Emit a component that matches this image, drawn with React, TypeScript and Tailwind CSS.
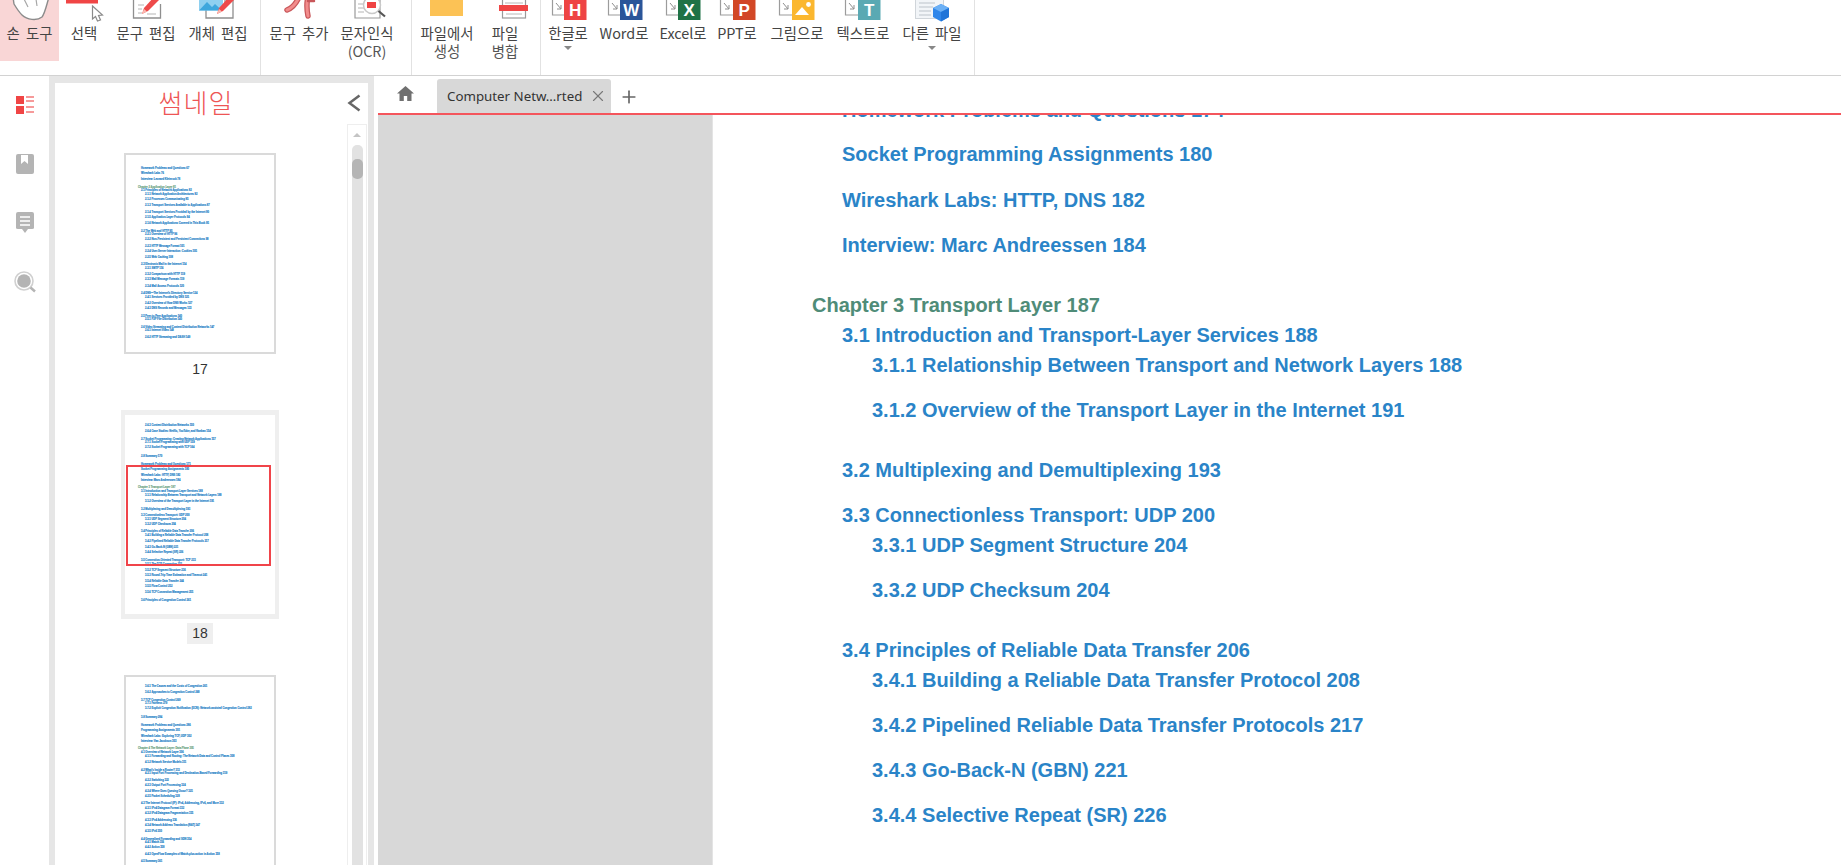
import { Plus, X } from "lucide-react";
import type { ReactNode } from "react";

const KR = "font-['Noto_Sans_CJK_KR','Noto_Sans',sans-serif]";

function HandIcon() {
    return (
        <svg viewBox="0 0 59 24" className="w-full h-full">
            <path d="M13 -3 L14 4 C17 9 19 12 22 15 C27 20 37 21 42 17 C45 13 46 7 49 -3 Z" fill="#fff" stroke="#8c8c8c" strokeWidth="1.4" />
            <path d="M24 -1 L28 7 M36 -1 L37 6" fill="none" stroke="#a8a8a8" strokeWidth="1.2" />
        </svg>
    );
}

function SelectIcon() {
    return (
        <svg viewBox="0 0 50 24" className="w-full h-full">
            <rect x="7" y="0" width="32" height="3.5" fill="#f04545" />
            <path d="M33.5 6 L43.5 15 L39.5 15.5 L41.5 20 L38.5 21 L36.5 16.5 L33.5 19 Z" fill="#fff" stroke="#8a8a8a" strokeWidth="1.2" />
        </svg>
    );
}

function Pencil({ x, y }: { x: number; y: number }) {
    return (
        <g transform={`translate(${x} ${y})`}>
            <path d="M0 14 L2 8 L12 -3 L17 0 L6 11 Z" fill="#ee4a4a" />
            <path d="M0 14 L2 9 L5 11.5 Z" fill="#f9b9b0" />
        </g>
    );
}

function TextEditIcon() {
    return (
        <svg viewBox="0 0 74 24" className="w-full h-full">
            <path d="M24.5 -2 V18 H51.5 V4" fill="#fff" stroke="#8f8f8f" strokeWidth="1.3" />
            <path d="M29 5 H35 M29 9 H33 M29 13 H33 M38 14 H47" stroke="#b5b5b5" strokeWidth="1" />
            <Pencil x={33} y={0} />
        </svg>
    );
}

function ObjectEditIcon() {
    return (
        <svg viewBox="0 0 70 24" className="w-full h-full">
            <path d="M23 -2 V18 H50 V-2" fill="#fff" stroke="#8f8f8f" strokeWidth="1.3" />
            <rect x="16" y="-2" width="24" height="12.5" fill="#8fd0f0" />
            <path d="M16 10.5 L24 2 L29 7 L32 4 L39 10.5 Z" fill="#3ea7dd" />
            <rect x="41" y="0" width="5" height="4" fill="#b9b9b9" />
            <Pencil x={34} y={0} />
        </svg>
    );
}

function AddTextIcon() {
    return (
        <svg viewBox="0 0 76 24" className="w-full h-full">
            <g fill="none" strokeLinecap="round">
                <path d="M38 -3 C35 4 31 8 26 10" stroke="#c8575a" strokeWidth="5.5" />
                <path d="M47 -3 C45 5 46 11 47 16" stroke="#c8575a" strokeWidth="5.5" />
                <path d="M38 -3 C35 4 31 8 26 10" stroke="#f28c8c" strokeWidth="3" />
                <path d="M47 -3 C45 5 46 11 47 16" stroke="#f28c8c" strokeWidth="3" />
                <path d="M47 1 H53" stroke="#c8575a" strokeWidth="2.5" />
            </g>
        </svg>
    );
}

function OcrIcon() {
    return (
        <svg viewBox="0 0 60 24" className="w-full h-full">
            <path d="M18 -2 V18 H43 V-2" fill="#fff" stroke="#9a9a9a" strokeWidth="1.2" />
            <path d="M21 4 H27 M21 8 H27 M21 12 H27" stroke="#b5b5b5" strokeWidth="1" />
            <circle cx="35" cy="5" r="8.5" fill="#fff" stroke="#c9c9c9" strokeWidth="1.5" />
            <rect x="30" y="2" width="9" height="6" fill="#ef4444" />
            <path d="M41.5 11 L48 16.5" stroke="#555" strokeWidth="2.2" />
        </svg>
    );
}

function FolderIcon() {
    return (
        <svg viewBox="0 0 70 24" className="w-full h-full">
            <rect x="18" y="-1" width="33" height="17" fill="#fcc255" />
        </svg>
    );
}

function MergeIcon() {
    return (
        <svg viewBox="0 0 46 24" className="w-full h-full">
            <rect x="20.5" y="-2" width="23" height="20" fill="#fff" stroke="#9a9a9a" strokeWidth="1.2" />
            <path d="M23 3 H41 M24 14 H40" stroke="#b8b8b8" strokeWidth="1" />
            <rect x="17" y="5" width="30" height="6" fill="#f04545" />
        </svg>
    );
}

function OfficeIcon({ w, doc, sq, color, letter }: { w: number; doc: number; sq: number; color: string; letter: string }) {
    return (
        <svg viewBox={`0 0 ${w} 24`} className="w-full h-full">
            <path d={`M${doc + 0.5} -2 V15 H${sq}`} fill="none" stroke="#9c9c9c" strokeWidth="1.2" />
            <path d={`M${doc + 4} 3 L${doc + 9} 9 M${doc + 9} 5 V9 H${doc + 5}`} fill="none" stroke="#8e8e8e" strokeWidth="1" />
            <rect x={sq} y="-1" width="22.5" height="21" fill={color} />
            {letter ? (
                <text x={sq + 11.2} y="16" textAnchor="middle" fill="#fff" fontSize="17" fontWeight="700" fontFamily="Liberation Sans, sans-serif">
                    {letter}
                </text>
            ) : (
                <>
                    <path d={`M${sq + 3} 15 L${sq + 10} 7 L${sq + 17} 15 Z`} fill="#fff" />
                    <circle cx={sq + 16.5} cy="4.5" r="2.4" fill="#fff" />
                </>
            )}
        </svg>
    );
}

function OtherIcon() {
    return (
        <svg viewBox="0 0 78 24" className="w-full h-full">
            <rect x="22.5" y="-2" width="28" height="20.5" fill="#f2f5f8" stroke="#d0d5da" strokeWidth="1" />
            <path d="M26 3 H42 M26 7 H40 M26 11 H38 M26 15 H38" stroke="#bcc3ca" strokeWidth="1" />
            <path d="M48 4 L56 8 V17 L48 21.5 L40 17 V8 Z" fill="#2f86ea" />
            <path d="M48 4 L56 8 L48 12 L40 8 Z" fill="#6cb0f5" />
            <path d="M48 12 L56 8 V17 L48 21.5 Z" fill="#1f74d8" />
        </svg>
    );
}

function ToolItem({ width, icon, label, label2, caret, active }: { width: string; icon: ReactNode; label: string; label2?: string; caret?: boolean; active?: boolean }) {
    return (
        <div className={`${width} ${active ? "bg-[#f9d6d6]" : ""} h-[61px] flex flex-col items-center shrink-0`}>
            <div className="w-full h-[24px] shrink-0 overflow-hidden">{icon}</div>
            <div className={`${KR} text-[14.4px] [word-spacing:3px] leading-[18px] text-[#444] whitespace-nowrap`}>{label}</div>
            {label2 && <div className={`${KR} text-[14.4px] leading-[18px] text-[#555] whitespace-nowrap`}>{label2}</div>}
            {caret && <div className="mt-[4px] w-0 h-0 border-x-[4px] border-x-transparent border-t-[4px] border-t-[#888]"></div>}
        </div>
    );
}

function Toolbar() {
    return (
        <div className="h-[76px] shrink-0 flex border-b border-[#d2d2d2] bg-white">
            <div className="w-[261px] shrink-0 flex border-r border-[#e2e2e2]">
                <ToolItem width="w-[59px]" icon={<HandIcon />} label="손 도구" active />
                <ToolItem width="w-[50px]" icon={<SelectIcon />} label="선택" />
                <ToolItem width="w-[74px]" icon={<TextEditIcon />} label="문구 편집" />
                <ToolItem width="w-[70px]" icon={<ObjectEditIcon />} label="개체 편집" />
            </div>
            <div className="w-[151px] shrink-0 flex border-r border-[#e2e2e2]">
                <ToolItem width="w-[76px]" icon={<AddTextIcon />} label="문구 추가" />
                <ToolItem width="w-[60px]" icon={<OcrIcon />} label="문자인식" label2="(OCR)" />
            </div>
            <div className="w-[129px] shrink-0 flex border-r border-[#e2e2e2]">
                <ToolItem width="w-[70px]" icon={<FolderIcon />} label="파일에서" label2="생성" />
                <ToolItem width="w-[46px]" icon={<MergeIcon />} label="파일" label2="병합" />
            </div>
            <div className="w-[434px] shrink-0 flex border-r border-[#e2e2e2]">
                <ToolItem width="w-[54px]" icon={<OfficeIcon w={54} doc={11} sq={23} color="#ee4444" letter="H" />} label="한글로" caret />
                <ToolItem width="w-[58px]" icon={<OfficeIcon w={58} doc={13} sq={25} color="#2a5599" letter="W" />} label="Word로" />
                <ToolItem width="w-[60px]" icon={<OfficeIcon w={60} doc={13} sq={25} color="#1f7246" letter="X" />} label="Excel로" />
                <ToolItem width="w-[48px]" icon={<OfficeIcon w={48} doc={7} sq={20} color="#d24726" letter="P" />} label="PPT로" />
                <ToolItem width="w-[72px]" icon={<OfficeIcon w={72} doc={18} sq={31} color="#fbb72f" letter="" />} label="그림으로" />
                <ToolItem width="w-[60px]" icon={<OfficeIcon w={60} doc={12} sq={25} color="#5aa9b3" letter="T" />} label="텍스트로" />
                <ToolItem width="w-[78px]" icon={<OtherIcon />} label="다른 파일" caret />
            </div>
        </div>
    );
}

function SideRail() {
    return (
        <div className="w-[49px] shrink-0 bg-white flex flex-col items-center pt-[20px]">
            <svg width="18" height="18" viewBox="0 0 18 18">
                <rect x="0" y="0" width="8" height="8" fill="#f04545" />
                <rect x="0" y="10" width="8" height="8" fill="#f04545" />
                <path d="M10 1 H18 M10 5 H18 M10 11 H18 M10 16 H18" stroke="#f47a7a" strokeWidth="1.4" />
            </svg>
            <svg width="18" height="20" viewBox="0 0 18 20" className="mt-[40px]">
                <rect x="0" y="0" width="18" height="20" rx="2" fill="#b4b4b4" />
                <path d="M5 1 H12 V10 L8.5 7 L5 10 Z" fill="#fff" />
            </svg>
            <svg width="18" height="21" viewBox="0 0 18 21" className="mt-[38px]">
                <path d="M2 0 H16 Q18 0 18 2 V16 Q18 17 16 17 H12 L9 21 L6 17 H2 Q0 17 0 16 V2 Q0 0 2 0 Z" fill="#b4b4b4" />
                <path d="M4 5 H14 M4 9 H14 M4 13 H14" stroke="#fff" strokeWidth="1.5" />
            </svg>
            <svg width="22" height="22" viewBox="0 0 22 22" className="mt-[38px]">
                <circle cx="10" cy="10" r="9" fill="#fff" stroke="#d0d0d0" strokeWidth="1.6" />
                <circle cx="10" cy="10" r="6.8" fill="#b4b4b4" />
                <path d="M16.5 16.5 L21 20.5" stroke="#b4b4b4" strokeWidth="2.4" />
            </svg>
        </div>
    );
}

type Row = [number, string, string];

const gapClass: Record<string, string> = {
    n: "mt-0",
    a: "mt-[0.7px]",
    b: "mt-[2px]",
    c: "mt-[3.3px]",
    d: "mt-[4.5px]",
    e: "mt-[5.7px]",
};

const page17: Row[] = [
    [1, "n", "Homework Problems and Questions 67"],
    [1, "b", "Wireshark Labs 76"],
    [1, "c", "Interview: Leonard Kleinrock 78"],
    [0, "d", "Chapter 2 Application Layer 81"],
    [1, "a", "2.1 Principles of Network Applications 82"],
    [2, "a", "2.1.1 Network Application Architectures 82"],
    [2, "b", "2.1.2 Processes Communicating 85"],
    [2, "c", "2.1.3 Transport Services Available to Applications 87"],
    [2, "c", "2.1.4 Transport Services Provided by the Internet 90"],
    [2, "b", "2.1.5 Application-Layer Protocols 94"],
    [2, "c", "2.1.6 Network Applications Covered in This Book 95"],
    [1, "d", "2.2 The Web and HTTP 95"],
    [2, "a", "2.2.1 Overview of HTTP 96"],
    [2, "b", "2.2.2 Non-Persistent and Persistent Connections 98"],
    [2, "c", "2.2.3 HTTP Message Format 101"],
    [2, "b", "2.2.4 User-Server Interaction: Cookies 105"],
    [2, "c", "2.2.5 Web Caching 108"],
    [1, "d", "2.3 Electronic Mail in the Internet 114"],
    [2, "a", "2.3.1 SMTP 116"],
    [2, "c", "2.3.2 Comparison with HTTP 119"],
    [2, "b", "2.3.3 Mail Message Formats 119"],
    [2, "c", "2.3.4 Mail Access Protocols 120"],
    [1, "d", "2.4 DNS—The Internet's Directory Service 124"],
    [2, "a", "2.4.1 Services Provided by DNS 125"],
    [2, "c", "2.4.2 Overview of How DNS Works 127"],
    [2, "b", "2.4.3 DNS Records and Messages 133"],
    [1, "d", "2.5 Peer-to-Peer Applications 140"],
    [2, "a", "2.5.1 P2P File Distribution 140"],
    [1, "d", "2.6 Video Streaming and Content Distribution Networks 147"],
    [2, "a", "2.6.1 Internet Video 148"],
    [2, "c", "2.6.2 HTTP Streaming and DASH 149"],
];

const page18: Row[] = [
    [2, "n", "2.6.3 Content Distribution Networks 150"],
    [2, "c", "2.6.4 Case Studies: Netflix, YouTube, and Kankan 154"],
    [1, "d", "2.7 Socket Programming: Creating Network Applications 157"],
    [2, "a", "2.7.1 Socket Programming with UDP 159"],
    [2, "b", "2.7.2 Socket Programming with TCP 164"],
    [1, "e", "2.8 Summary 170"],
    [1, "d", "Homework Problems and Questions 171"],
    [1, "b", "Socket Programming Assignments 180"],
    [1, "c", "Wireshark Labs: HTTP, DNS 182"],
    [1, "b", "Interview: Marc Andreessen 184"],
    [0, "d", "Chapter 3 Transport Layer 187"],
    [1, "a", "3.1 Introduction and Transport-Layer Services 188"],
    [2, "a", "3.1.1 Relationship Between Transport and Network Layers 188"],
    [2, "c", "3.1.2 Overview of the Transport Layer in the Internet 191"],
    [1, "d", "3.2 Multiplexing and Demultiplexing 193"],
    [1, "c", "3.3 Connectionless Transport: UDP 200"],
    [2, "a", "3.3.1 UDP Segment Structure 204"],
    [2, "b", "3.3.2 UDP Checksum 204"],
    [1, "d", "3.4 Principles of Reliable Data Transfer 206"],
    [2, "a", "3.4.1 Building a Reliable Data Transfer Protocol 208"],
    [2, "c", "3.4.2 Pipelined Reliable Data Transfer Protocols 217"],
    [2, "c", "3.4.3 Go-Back-N (GBN) 221"],
    [2, "b", "3.4.4 Selective Repeat (SR) 226"],
    [1, "d", "3.5 Connection-Oriented Transport: TCP 233"],
    [2, "a", "3.5.1 The TCP Connection 233"],
    [2, "c", "3.5.2 TCP Segment Structure 236"],
    [2, "b", "3.5.3 Round-Trip Time Estimation and Timeout 241"],
    [2, "c", "3.5.4 Reliable Data Transfer 244"],
    [2, "b", "3.5.5 Flow Control 252"],
    [2, "c", "3.5.6 TCP Connection Management 255"],
    [1, "d", "3.6 Principles of Congestion Control 261"],
];

const page19: Row[] = [
    [2, "n", "3.6.1 The Causes and the Costs of Congestion 261"],
    [2, "c", "3.6.2 Approaches to Congestion Control 268"],
    [1, "d", "3.7 TCP Congestion Control 269"],
    [2, "a", "3.7.1 Fairness 279"],
    [2, "b", "3.7.2 Explicit Congestion Notification (ECN): Network-assisted Congestion Control 282"],
    [1, "e", "3.8 Summary 284"],
    [1, "d", "Homework Problems and Questions 286"],
    [1, "b", "Programming Assignments 301"],
    [1, "c", "Wireshark Labs: Exploring TCP, UDP 302"],
    [1, "b", "Interview: Van Jacobson 303"],
    [0, "d", "Chapter 4 The Network Layer: Data Plane 305"],
    [1, "a", "4.1 Overview of Network Layer 306"],
    [2, "a", "4.1.1 Forwarding and Routing: The Network Data and Control Planes 308"],
    [2, "c", "4.1.2 Network Service Models 311"],
    [1, "d", "4.2 What's Inside a Router? 313"],
    [2, "a", "4.2.1 Input Port Processing and Destination-Based Forwarding 319"],
    [2, "c", "4.2.2 Switching 322"],
    [2, "b", "4.2.3 Output Port Processing 324"],
    [2, "c", "4.2.4 Where Does Queuing Occur? 325"],
    [2, "b", "4.2.5 Packet Scheduling 328"],
    [1, "d", "4.3 The Internet Protocol (IP): IPv4, Addressing, IPv6, and More 332"],
    [2, "b", "4.3.1 IPv4 Datagram Format 332"],
    [2, "b", "4.3.2 IPv4 Datagram Fragmentation 335"],
    [2, "c", "4.3.3 IPv4 Addressing 336"],
    [2, "b", "4.3.4 Network Address Translation (NAT) 347"],
    [2, "c", "4.3.5 IPv6 350"],
    [1, "d", "4.4 Generalized Forwarding and SDN 354"],
    [2, "a", "4.4.1 Match 356"],
    [2, "b", "4.4.2 Action 358"],
    [2, "c", "4.4.3 OpenFlow Examples of Match-plus-action in Action 358"],
    [1, "d", "4.5 Summary 361"],
];

const levelClass = [
    "pl-[12px] text-[#6fa585] [-webkit-text-stroke:0.15px_#6fa585]",
    "pl-[15px] text-[#2a84c8] [-webkit-text-stroke:0.15px_#2a84c8]",
    "pl-[19px] text-[#2a84c8] [-webkit-text-stroke:0.15px_#2a84c8]",
];

function ThumbText({ rows }: { rows: Row[] }) {
    return (
        <div className="font-['Liberation_Sans',sans-serif] font-bold text-[2.6px] leading-[3px]">
            {rows.map(([level, gap, text]) => (
                <div key={text} className={`${levelClass[level]} ${gapClass[gap]} h-[3px] whitespace-nowrap`}>
                    {text}
                </div>
            ))}
        </div>
    );
}

function ThumbPanel() {
    return (
        <div className="w-[313px] shrink-0 bg-white flex flex-col">
            <div className="h-[41px] shrink-0 flex items-center">
                <div className={`${KR} w-[282px] text-center text-[26px] leading-[36px] font-light text-[#ee5555] tracking-[1px] mb-[4px]`}>썸네일</div>
                <svg width="14" height="18" viewBox="0 0 14 18" className="ml-[10px] mb-[2px]">
                    <path d="M12.5 1.5 L2.5 9 L12.5 16.5" fill="none" stroke="#666" strokeWidth="2.5" />
                </svg>
            </div>
            <div className="flex-1 flex overflow-hidden">
                <div className="w-[290px] shrink-0 flex flex-col items-center">
                    <div className="mt-[29px] w-[152px] h-[201px] shrink-0 border-2 border-[#dadada] pt-[12px] overflow-hidden">
                        <ThumbText rows={page17} />
                    </div>
                    <div className="mt-[5px] h-[21px] w-[26px] flex items-center justify-center font-['Liberation_Sans',sans-serif] text-[14px] text-[#333]">17</div>
                    <div className="mt-[30px] w-[158px] h-[209px] shrink-0 bg-[#efefef] p-[4px] pt-[5px] pb-[5px]">
                        <div className="relative w-full h-full bg-white pt-[9px] pl-px overflow-hidden">
                            <ThumbText rows={page18} />
                            <div className="absolute left-[1px] top-[50px] w-[145px] h-[101px] border-2 border-[#f0444a]"></div>
                        </div>
                    </div>
                    <div className="mt-[4px] h-[21px] w-[26px] shrink-0 flex items-center justify-center bg-[#efefef] font-['Liberation_Sans',sans-serif] text-[14px] text-[#333]">18</div>
                    <div className="mt-[31px] w-[152px] h-[201px] shrink-0 border-2 border-b-0 border-[#dadada] pt-[8px] overflow-hidden">
                        <ThumbText rows={page19} />
                    </div>
                </div>
                <div className="ml-[2px] w-[20px] shrink-0 border-x border-t border-[#eeeeee] flex flex-col items-center">
                    <div className="h-[20px] shrink-0 flex items-center justify-center">
                        <div className="w-0 h-0 border-x-[4px] border-x-transparent border-b-[4px] border-b-[#c4c4c4]"></div>
                    </div>
                    <div className="flex-1 w-[11px] rounded-t-[5px] bg-[#e2e2e2] pt-[14px]">
                        <div className="h-[20px] rounded-[5px] bg-[#b5b5b5]"></div>
                    </div>
                </div>
            </div>
        </div>
    );
}

function TabBar() {
    return (
        <div className="h-[39px] shrink-0 flex items-end bg-white border-b-2 border-[#f4555c] ml-[4px]">
            <div className="w-[55px] mr-[4px] h-full flex items-center justify-center shrink-0">
                <svg width="17" height="15" viewBox="0 0 17 15" className="mb-[2px]">
                    <path d="M8.5 0 L0 7.5 H2.5 V15 H6.8 V10 H10.2 V15 H14.5 V7.5 H17 Z" fill="#707070" />
                </svg>
            </div>
            <div className="w-[174px] h-[34px] shrink-0 rounded-t-[3px] bg-[#d8d8d8] flex items-center pl-[10px]">
                <span className="font-['Noto_Sans',sans-serif] text-[13.3px] leading-[20px] text-[#333] whitespace-nowrap w-[142px]">Computer Netw…rted</span>
                <X size={18} strokeWidth={1.5} className="text-[#777]" />
            </div>
            <Plus size={20} strokeWidth={2} className="text-[#666] ml-[8px] mb-[6px]" />
        </div>
    );
}

const tocRows: [string, string, string][] = [
    ["mt-[-16px]", "pl-[30px]", "Homework Problems and Questions 174"],
    ["mt-[22px]", "pl-[30px]", "Socket Programming Assignments 180"],
    ["mt-[24px]", "pl-[30px]", "Wireshark Labs: HTTP, DNS 182"],
    ["mt-[23px]", "pl-[30px]", "Interview: Marc Andreessen 184"],
    ["mt-[38px] text-[#4f8c78]", "pl-0", "Chapter 3 Transport Layer 187"],
    ["mt-[8px]", "pl-[30px]", "3.1 Introduction and Transport-Layer Services 188"],
    ["mt-[8px]", "pl-[60px]", "3.1.1 Relationship Between Transport and Network Layers 188"],
    ["mt-[23px]", "pl-[60px]", "3.1.2 Overview of the Transport Layer in the Internet 191"],
    ["mt-[38px]", "pl-[30px]", "3.2 Multiplexing and Demultiplexing 193"],
    ["mt-[23px]", "pl-[30px]", "3.3 Connectionless Transport: UDP 200"],
    ["mt-[8px]", "pl-[60px]", "3.3.1 UDP Segment Structure 204"],
    ["mt-[23px]", "pl-[60px]", "3.3.2 UDP Checksum 204"],
    ["mt-[38px]", "pl-[30px]", "3.4 Principles of Reliable Data Transfer 206"],
    ["mt-[8px]", "pl-[60px]", "3.4.1 Building a Reliable Data Transfer Protocol 208"],
    ["mt-[23px]", "pl-[60px]", "3.4.2 Pipelined Reliable Data Transfer Protocols 217"],
    ["mt-[23px]", "pl-[60px]", "3.4.3 Go-Back-N (GBN) 221"],
    ["mt-[23px]", "pl-[60px]", "3.4.4 Selective Repeat (SR) 226"],
];

function DocumentView() {
    return (
        <div className="flex-1 flex overflow-hidden">
            <div className="w-[335px] ml-[4px] shrink-0 bg-[#d8d8d8] border-r border-[#e4e4e4]"></div>
            <div className="flex-1 bg-white pl-[99px] font-['Liberation_Sans',sans-serif] font-bold text-[20px] leading-[22px] text-[#2a84c8]">
                {tocRows.map(([margin, indent, text]) => (
                    <div key={text} className={`${margin} ${indent} whitespace-nowrap`}>
                        {text}
                    </div>
                ))}
            </div>
        </div>
    );
}

export default function App() {
    return (
        <div className="w-[1841px] h-[865px] overflow-hidden flex flex-col bg-white">
            <Toolbar />
            <div className="flex-1 flex min-h-0">
                <SideRail />
                <div className="w-[325px] shrink-0 bg-[#e6e6e6] px-[6px] pt-[7px] flex">
                    <ThumbPanel />
                </div>
                <div className="flex-1 flex flex-col min-w-0">
                    <TabBar />
                    <DocumentView />
                </div>
            </div>
        </div>
    );
}
